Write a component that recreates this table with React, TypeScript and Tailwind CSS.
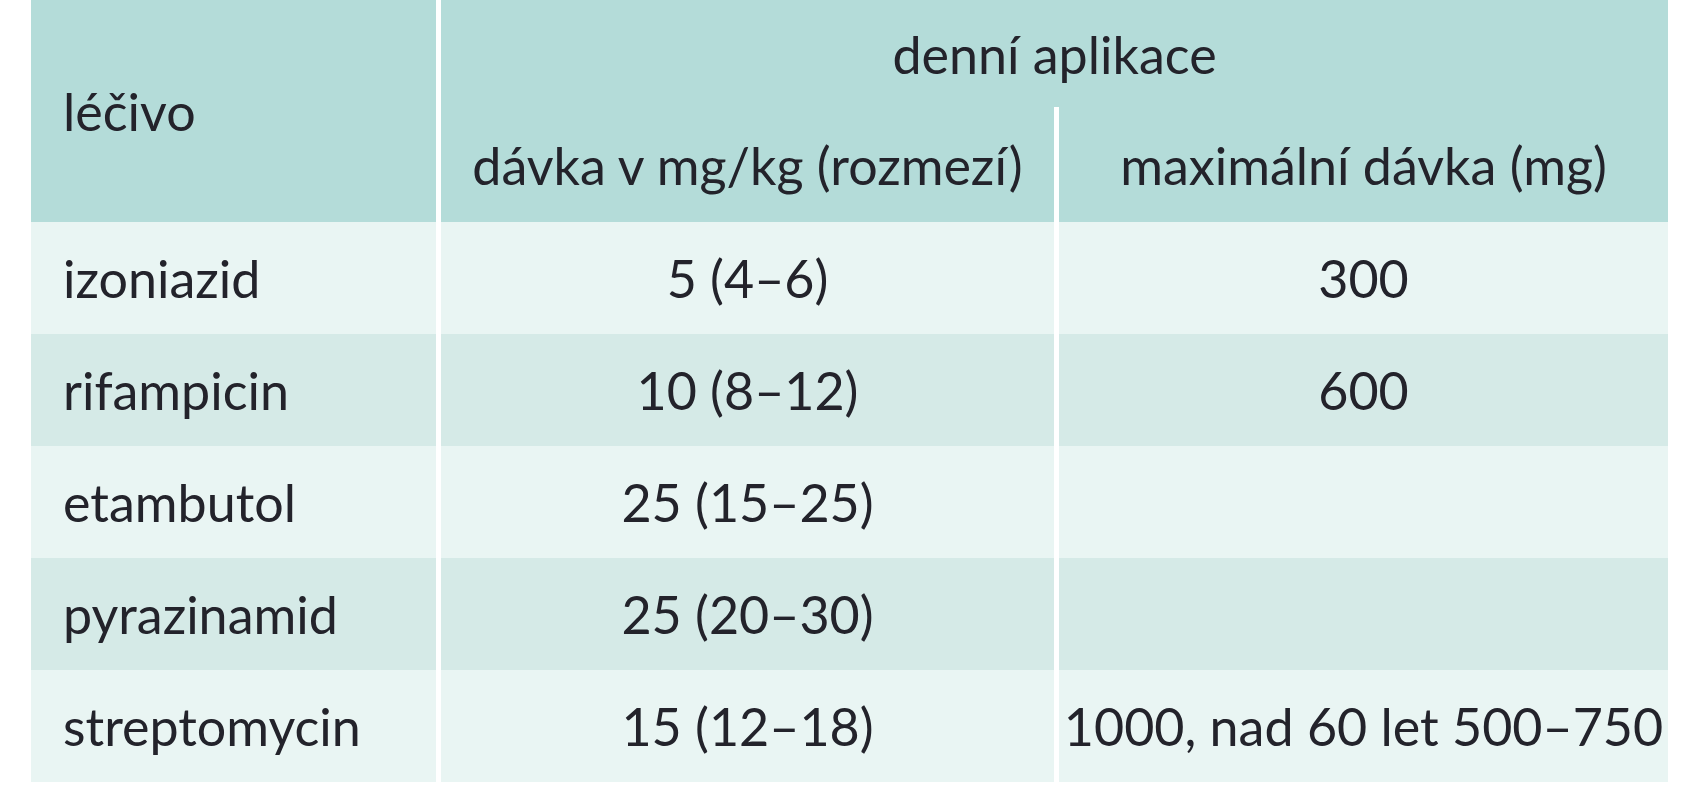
const radky = [
  { lecivo: 'izoniazid', davka: '5 (4–6)', max: '300' },
  { lecivo: 'rifampicin', davka: '10 (8–12)', max: '600' },
  { lecivo: 'etambutol', davka: '25 (15–25)', max: '' },
  { lecivo: 'pyrazinamid', davka: '25 (20–30)', max: '' },
  { lecivo: 'streptomycin', davka: '15 (12–18)', max: '1000, nad 60 let 500–750' },
];

export default function App() {
  return (
    <div className="min-h-screen bg-white pl-[31px] text-[#23232b] text-[52px] leading-none [font-family:Lato,'Noto_Sans',sans-serif]">
      <div className="grid w-[1637px] grid-cols-[405px_613px_609px] gap-x-[5px] bg-white">
        {/* hlavicka */}
        <div className="row-span-2 flex items-center bg-[#b4dcd9] pl-[32px]">léčivo</div>
        <div className="col-span-2 flex h-[107px] items-center justify-center bg-[#b4dcd9]">
          denní aplikace
        </div>
        <div className="flex h-[115px] items-center justify-center bg-[#b4dcd9]">
          dávka v mg/kg (rozmezí)
        </div>
        <div className="flex h-[115px] items-center justify-center bg-[#b4dcd9]">
          maximální dávka (mg)
        </div>

        {radky.map((r, i) => {
          const bg = i % 2 === 0 ? 'bg-[#e9f5f3]' : 'bg-[#d5eae7]';
          return (
            <div key={r.lecivo} className="contents">
              <div className={`flex h-[112px] items-center pl-[32px] ${bg}`}>{r.lecivo}</div>
              <div className={`flex h-[112px] items-center justify-center ${bg}`}>{r.davka}</div>
              <div className={`flex h-[112px] items-center justify-center ${bg}`}>{r.max}</div>
            </div>
          );
        })}
      </div>
    </div>
  );
}
